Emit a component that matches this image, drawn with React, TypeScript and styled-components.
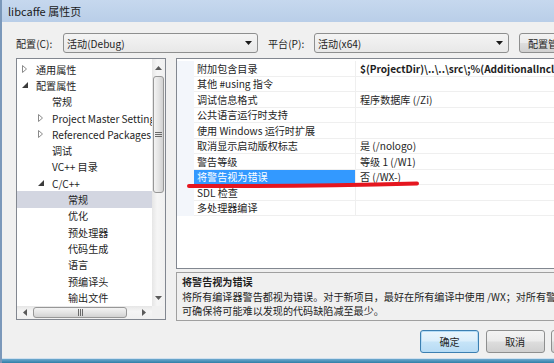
import React from "react";
import styled, { createGlobalStyle, css } from "styled-components";

const GlobalStyle = createGlobalStyle`
  html, body {
    margin: 0;
    padding: 0;
    overflow: hidden;
    background: #f0f0f0;
  }
  body {
    font-family: "Noto Sans CJK SC", "Noto Sans", sans-serif;
    font-size: 10.1px;
    color: #1e1e1e;
  }
`;

const Page = styled.div`
  position: relative;
  width: 554px;
  height: 363px;
  overflow: hidden;
`;

const Window = styled.div`
  width: 624px;
  height: 363px;
  display: flex;
  flex-direction: column;
  border-left: 2px solid #7b98ba;
  box-sizing: border-box;
`;

const TitleBar = styled.div`
  height: 22px;
  flex: none;
  padding-left: 6px;
  display: flex;
  align-items: center;
  font-size: 11px;
  color: #1a1a1a;
  background: linear-gradient(#c6d8ee, #b9cee8);
`;

const Body = styled.div`
  flex: 1;
  background: #f0f0f0;
  padding: 0 14px;
  display: flex;
  flex-direction: column;
  border-bottom: 1px solid #cfe0ef;
`;

const BottomFrame = styled.div`
  height: 4px;
  flex: none;
  background: linear-gradient(#6fa9cf, #2f7ea6);
`;

const ConfigRow = styled.div`
  margin-top: 11px;
  height: 20px;
  display: flex;
  align-items: center;
`;

const Label = styled.span<{ $w: number; $gap?: number }>`
  width: ${(p) => p.$w}px;
  margin-left: ${(p) => p.$gap ?? 0}px;
  flex: none;
  white-space: nowrap;
`;

const winButton = css`
  box-sizing: border-box;
  border: 1px solid #8e8f8f;
  border-radius: 3px;
  background: linear-gradient(#f3f3f3, #ebebeb 48%, #dddddd 52%, #d0d0d0);
  font: inherit;
  color: #1e1e1e;
  padding: 0;
`;

const Combo = styled.div`
  ${winButton}
  width: 195px;
  height: 20px;
  flex: none;
  display: flex;
  align-items: center;
  justify-content: space-between;
  padding: 0 5px 0 3px;
  background: linear-gradient(#f4f4f4, #e8e8e8);
`;

const ComboArrow = () => (
  <svg width="7" height="4" viewBox="0 0 7 4">
    <path d="M0 0 H7 L3.5 4 Z" fill="#1a1a1a" />
  </svg>
);

const ManagerButton = styled.button`
  ${winButton}
  margin-left: 10px;
  flex: 1;
  height: 20px;
  white-space: nowrap;
`;

const Panels = styled.div`
  margin-top: 5px;
  height: 263px;
  display: flex;
  gap: 10px;
`;

const Tree = styled.div`
  width: 150px;
  height: 262px;
  box-sizing: border-box;
  border: 1px solid #828790;
  background: #fff;
  display: grid;
  grid-template-columns: 1fr 13px;
  grid-template-rows: 1fr 13px;
  flex: none;
`;

const TreeList = styled.div`
  padding-top: 2px;
  overflow: hidden;
`;

const TreeItem = styled.div<{ $level: number; $selected?: boolean }>`
  height: 16.3px;
  display: flex;
  align-items: center;
  padding-left: ${(p) => p.$level * 16}px;
  white-space: nowrap;
  background: ${(p) => (p.$selected ? "#d3d6e1" : "transparent")};
`;

const Toggle = styled.span`
  width: 19px;
  flex: none;
  display: flex;
  align-items: center;
  padding-left: 5px;
  box-sizing: border-box;
`;

const Collapsed = () => (
  <svg width="5" height="8" viewBox="0 0 5 8">
    <path d="M0.5 0.5 L4.5 4 L0.5 7.5 Z" fill="none" stroke="#8a8a8a" />
  </svg>
);

const Expanded = () => (
  <svg width="6" height="6" viewBox="0 0 6 6">
    <path d="M6 0 V6 H0 Z" fill="#3c3c3c" />
  </svg>
);

const VScroll = styled.div`
  background: linear-gradient(90deg, #e6e6e6, #f5f5f5 40%, #f0f0f0);
  display: flex;
  flex-direction: column;
  align-items: center;
`;

const HScroll = styled.div`
  background: linear-gradient(#e6e6e6, #f5f5f5 40%, #f0f0f0);
  display: flex;
  align-items: center;
`;

const Corner = styled.div`
  background: #f0f0f0;
`;

const ArrowBox = styled.div<{ $size: number }>`
  flex: none;
  width: ${(p) => p.$size}px;
  height: ${(p) => p.$size}px;
  display: flex;
  align-items: center;
  justify-content: center;
`;

const Thumb = styled.div<{ $vertical?: boolean; $len: number }>`
  flex: none;
  box-sizing: border-box;
  border: 1px solid #979797;
  border-radius: 3px;
  display: flex;
  align-items: center;
  justify-content: center;
  ${(p) =>
    p.$vertical
      ? css`
          width: 11px;
          height: ${p.$len}px;
          background: linear-gradient(90deg, #f3f3f3, #e4e4e4 50%, #d2d2d2);
        `
      : css`
          width: ${p.$len}px;
          height: 11px;
          background: linear-gradient(#f3f3f3, #e4e4e4 50%, #d2d2d2);
        `}
`;

const Spacer = styled.div`
  flex: 1;
`;

const Grip = ({ vertical }: { vertical?: boolean }) =>
  vertical ? (
    <svg width="7" height="5" viewBox="0 0 7 5">
      <path d="M0 0.5 H7 M0 2.5 H7 M0 4.5 H7" stroke="#6a6a6a" />
    </svg>
  ) : (
    <svg width="5" height="7" viewBox="0 0 5 7">
      <path d="M0.5 0 V7 M2.5 0 V7 M4.5 0 V7" stroke="#6a6a6a" />
    </svg>
  );

const Tri = ({ dir }: { dir: "up" | "down" | "left" | "right" }) => {
  const d = {
    up: "M0 4 L3.5 0 L7 4 Z",
    down: "M0 0 L7 0 L3.5 4 Z",
    left: "M4 0 L4 7 L0 3.5 Z",
    right: "M0 0 L4 3.5 L0 7 Z",
  }[dir];
  const vertical = dir === "up" || dir === "down";
  return (
    <svg width={vertical ? 7 : 4} height={vertical ? 4 : 7} viewBox={vertical ? "0 0 7 4" : "0 0 4 7"}>
      <path d={d} fill="#5a5a5a" />
    </svg>
  );
};

const RightCol = styled.div`
  flex: 1;
  display: flex;
  flex-direction: column;
  gap: 3px;
`;

const Grid = styled.div`
  height: 211px;
  box-sizing: border-box;
  border: 1px solid #828790;
  background: #fff;
  padding-top: 2px;
  flex: none;
`;

const GridRow = styled.div`
  height: 15.5px;
  display: grid;
  grid-template-columns: 17px 162px 1fr;
`;

const Gutter = styled.div`
  background: #f3f6fb;
`;

const Cell = styled.div<{ $selected?: boolean; $bold?: boolean; $value?: boolean }>`
  box-sizing: border-box;
  border-bottom: 1px solid #efefef;
  border-right: ${(p) => (p.$value ? "none" : "1px solid #efefef")};
  padding-left: ${(p) => (p.$value ? 4 : 3)}px;
  display: flex;
  align-items: center;
  white-space: nowrap;
  overflow: hidden;
  font-weight: ${(p) => (p.$bold ? 700 : 400)};
  background: ${(p) => (p.$selected ? "#3399ff" : "transparent")};
  color: ${(p) => (p.$selected ? "#fff" : "inherit")};
`;

const Desc = styled.div`
  flex: 1;
  box-sizing: border-box;
  border: 1px solid #a0a0a0;
  padding: 2px 5px;
  line-height: 14.5px;
  white-space: nowrap;
  overflow: hidden;
`;

const DescTitle = styled.div`
  font-weight: 700;
`;

const ButtonRow = styled.div`
  margin-top: 9px;
  height: 23px;
  display: flex;
  justify-content: flex-end;
  gap: 6.5px;
`;

const DialogButton = styled.button<{ $primary?: boolean }>`
  ${winButton}
  width: 59px;
  height: 23px;
  ${(p) =>
    p.$primary &&
    css`
      border-color: #3c7fb1;
      box-shadow: inset 0 0 0 1px #b4dcf7;
      background: linear-gradient(#eaf5fc, #dbeefb 48%, #c6e4f8 52%, #b7dbf4);
    `}
`;

const Annotation = styled.svg`
  position: absolute;
  left: 0;
  top: 0;
  pointer-events: none;
`;

type TreeNode = { label: string; level: number; toggle?: "open" | "closed"; selected?: boolean };

const treeNodes: TreeNode[] = [
  { label: "通用属性", level: 0, toggle: "closed" },
  { label: "配置属性", level: 0, toggle: "open" },
  { label: "常规", level: 1 },
  { label: "Project Master Settings", level: 1, toggle: "closed" },
  { label: "Referenced Packages", level: 1, toggle: "closed" },
  { label: "调试", level: 1 },
  { label: "VC++ 目录", level: 1 },
  { label: "C/C++", level: 1, toggle: "open" },
  { label: "常规", level: 2, selected: true },
  { label: "优化", level: 2 },
  { label: "预处理器", level: 2 },
  { label: "代码生成", level: 2 },
  { label: "语言", level: 2 },
  { label: "预编译头", level: 2 },
  { label: "输出文件", level: 2 },
  { label: "浏览信息", level: 2 },
];

type Prop = { name: string; value?: string; bold?: boolean; selected?: boolean };

const props: Prop[] = [
  { name: "附加包含目录", value: "$(ProjectDir)\\..\\..\\src\\;%(AdditionalIncludeDirectories)", bold: true },
  { name: "其他 #using 指令" },
  { name: "调试信息格式", value: "程序数据库 (/Zi)" },
  { name: "公共语言运行时支持" },
  { name: "使用 Windows 运行时扩展" },
  { name: "取消显示启动版权标志", value: "是 (/nologo)" },
  { name: "警告等级", value: "等级 1 (/W1)" },
  { name: "将警告视为错误", value: "否 (/WX-)", selected: true },
  { name: "SDL 检查" },
  { name: "多处理器编译" },
];

export default function App() {
  return (
    <Page>
      <GlobalStyle />
      <Window>
        <TitleBar>libcaffe 属性页</TitleBar>
        <Body>
          <ConfigRow>
            <Label $w={47}>配置(C):</Label>
            <Combo>
              <span>活动(Debug)</span>
              <ComboArrow />
            </Combo>
            <Label $w={46} $gap={10}>
              平台(P):
            </Label>
            <Combo>
              <span>活动(x64)</span>
              <ComboArrow />
            </Combo>
            <ManagerButton>配置管理器(O)...</ManagerButton>
          </ConfigRow>

          <Panels>
            <Tree>
              <TreeList>
                {treeNodes.map((n, i) => (
                  <TreeItem key={i} $level={n.level} $selected={n.selected}>
                    <Toggle>
                      {n.toggle === "closed" && <Collapsed />}
                      {n.toggle === "open" && <Expanded />}
                    </Toggle>
                    {n.label}
                  </TreeItem>
                ))}
              </TreeList>
              <VScroll>
                <ArrowBox $size={17}>
                  <Tri dir="up" />
                </ArrowBox>
                <Thumb $vertical $len={117}>
                  <Grip vertical />
                </Thumb>
                <Spacer />
                <ArrowBox $size={17}>
                  <Tri dir="down" />
                </ArrowBox>
              </VScroll>
              <HScroll>
                <ArrowBox $size={16}>
                  <Tri dir="left" />
                </ArrowBox>
                <Thumb $len={94}>
                  <Grip />
                </Thumb>
                <Spacer />
                <ArrowBox $size={17}>
                  <Tri dir="right" />
                </ArrowBox>
              </HScroll>
              <Corner />
            </Tree>

            <RightCol>
              <Grid>
                {props.map((p, i) => (
                  <GridRow key={i}>
                    <Gutter />
                    <Cell $selected={p.selected}>{p.name}</Cell>
                    <Cell $value $bold={p.bold}>
                      {p.value ?? ""}
                    </Cell>
                  </GridRow>
                ))}
              </Grid>
              <Desc>
                <DescTitle>将警告视为错误</DescTitle>
                <div>将所有编译器警告都视为错误。对于新项目，最好在所有编译中使用 /WX；对所有警告都进行解决，</div>
                <div>可确保将可能难以发现的代码缺陷减至最少。</div>
              </Desc>
            </RightCol>
          </Panels>

          <ButtonRow>
            <DialogButton $primary>确定</DialogButton>
            <DialogButton>取消</DialogButton>
            <DialogButton>应用(A)</DialogButton>
          </ButtonRow>
        </Body>
        <BottomFrame />
      </Window>

      <Annotation width="554" height="363" viewBox="0 0 554 363">
        <path
          d="M189 186 Q300 186.5 417 183.5"
          fill="none"
          stroke="#e5161f"
          strokeWidth="4"
          strokeLinecap="round"
        />
      </Annotation>
    </Page>
  );
}
